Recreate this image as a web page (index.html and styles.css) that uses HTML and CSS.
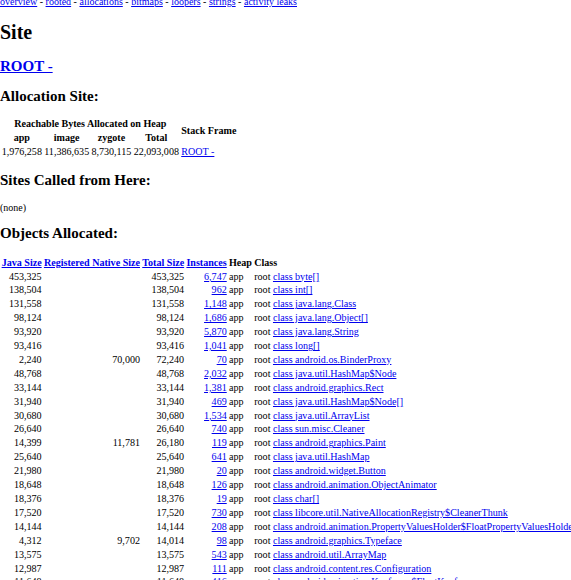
FILE: index.html
```html
<!DOCTYPE html>
<html>
<head>
<meta charset="utf-8">
<title>Site</title>
<link rel="stylesheet" href="styles.css">
</head>
<body>
<div class="page">
<div class="menu"><a href="#">overview</a> - <a href="#">rooted</a> - <a href="#">allocations</a> - <a href="#">bitmaps</a> - <a href="#">loopers</a> - <a href="#">strings</a> - <a href="#">activity leaks</a></div>
<h1>Site</h1>
<h2><a href="#">ROOT -</a></h2>
<h2 class="tight">Allocation Site:</h2>
<table>
<tr><th colspan="4">Reachable Bytes Allocated on Heap</th><th rowspan="2">Stack Frame</th></tr>
<tr><th>app</th><th>image</th><th>zygote</th><th>Total</th></tr>
<tr><td class="num">1,976,258</td><td class="num">11,386,635</td><td class="num">8,730,115</td><td class="num">22,093,008</td><td><a href="#">ROOT -</a></td></tr>
</table>
<h2>Sites Called from Here:</h2>
<p>(none)</p>
<h2>Objects Allocated:</h2>
<table>
<tr><th><a href="#">Java Size</a></th><th><a href="#">Registered Native Size</a></th><th><a href="#">Total Size</a></th><th><a href="#">Instances</a></th><th class="left">Heap</th><th class="left">Class</th></tr>
<tr><td class="num">453,325</td><td class="num"></td><td class="num">453,325</td><td class="num"><a href="#">6,747</a></td><td>app</td><td>root <a href="#">class byte[]</a></td></tr>
<tr><td class="num">138,504</td><td class="num"></td><td class="num">138,504</td><td class="num"><a href="#">962</a></td><td>app</td><td>root <a href="#">class int[]</a></td></tr>
<tr><td class="num">131,558</td><td class="num"></td><td class="num">131,558</td><td class="num"><a href="#">1,148</a></td><td>app</td><td>root <a href="#">class java.lang.Class</a></td></tr>
<tr><td class="num">98,124</td><td class="num"></td><td class="num">98,124</td><td class="num"><a href="#">1,686</a></td><td>app</td><td>root <a href="#">class java.lang.Object[]</a></td></tr>
<tr><td class="num">93,920</td><td class="num"></td><td class="num">93,920</td><td class="num"><a href="#">5,870</a></td><td>app</td><td>root <a href="#">class java.lang.String</a></td></tr>
<tr><td class="num">93,416</td><td class="num"></td><td class="num">93,416</td><td class="num"><a href="#">1,041</a></td><td>app</td><td>root <a href="#">class long[]</a></td></tr>
<tr><td class="num">2,240</td><td class="num">70,000</td><td class="num">72,240</td><td class="num"><a href="#">70</a></td><td>app</td><td>root <a href="#">class android.os.BinderProxy</a></td></tr>
<tr><td class="num">48,768</td><td class="num"></td><td class="num">48,768</td><td class="num"><a href="#">2,032</a></td><td>app</td><td>root <a href="#">class java.util.HashMap$Node</a></td></tr>
<tr><td class="num">33,144</td><td class="num"></td><td class="num">33,144</td><td class="num"><a href="#">1,381</a></td><td>app</td><td>root <a href="#">class android.graphics.Rect</a></td></tr>
<tr><td class="num">31,940</td><td class="num"></td><td class="num">31,940</td><td class="num"><a href="#">469</a></td><td>app</td><td>root <a href="#">class java.util.HashMap$Node[]</a></td></tr>
<tr><td class="num">30,680</td><td class="num"></td><td class="num">30,680</td><td class="num"><a href="#">1,534</a></td><td>app</td><td>root <a href="#">class java.util.ArrayList</a></td></tr>
<tr><td class="num">26,640</td><td class="num"></td><td class="num">26,640</td><td class="num"><a href="#">740</a></td><td>app</td><td>root <a href="#">class sun.misc.Cleaner</a></td></tr>
<tr><td class="num">14,399</td><td class="num">11,781</td><td class="num">26,180</td><td class="num"><a href="#">119</a></td><td>app</td><td>root <a href="#">class android.graphics.Paint</a></td></tr>
<tr><td class="num">25,640</td><td class="num"></td><td class="num">25,640</td><td class="num"><a href="#">641</a></td><td>app</td><td>root <a href="#">class java.util.HashMap</a></td></tr>
<tr><td class="num">21,980</td><td class="num"></td><td class="num">21,980</td><td class="num"><a href="#">20</a></td><td>app</td><td>root <a href="#">class android.widget.Button</a></td></tr>
<tr><td class="num">18,648</td><td class="num"></td><td class="num">18,648</td><td class="num"><a href="#">126</a></td><td>app</td><td>root <a href="#">class android.animation.ObjectAnimator</a></td></tr>
<tr><td class="num">18,376</td><td class="num"></td><td class="num">18,376</td><td class="num"><a href="#">19</a></td><td>app</td><td>root <a href="#">class char[]</a></td></tr>
<tr><td class="num">17,520</td><td class="num"></td><td class="num">17,520</td><td class="num"><a href="#">730</a></td><td>app</td><td>root <a href="#">class libcore.util.NativeAllocationRegistry$CleanerThunk</a></td></tr>
<tr><td class="num">14,144</td><td class="num"></td><td class="num">14,144</td><td class="num"><a href="#">208</a></td><td>app</td><td>root <a href="#">class android.animation.PropertyValuesHolder$FloatPropertyValuesHolder</a></td></tr>
<tr><td class="num">4,312</td><td class="num">9,702</td><td class="num">14,014</td><td class="num"><a href="#">98</a></td><td>app</td><td>root <a href="#">class android.graphics.Typeface</a></td></tr>
<tr><td class="num">13,575</td><td class="num"></td><td class="num">13,575</td><td class="num"><a href="#">543</a></td><td>app</td><td>root <a href="#">class android.util.ArrayMap</a></td></tr>
<tr><td class="num">12,987</td><td class="num"></td><td class="num">12,987</td><td class="num"><a href="#">111</a></td><td>app</td><td>root <a href="#">class android.content.res.Configuration</a></td></tr>
<tr><td class="num">11,648</td><td class="num"></td><td class="num">11,648</td><td class="num"><a href="#">416</a></td><td>app</td><td>root <a href="#">class android.animation.Keyframe$FloatKeyframe</a></td></tr>
<tr><td class="num">10,880</td><td class="num"></td><td class="num">10,880</td><td class="num"><a href="#">340</a></td><td>app</td><td>root <a href="#">class android.graphics.Matrix</a></td></tr>
</table>
</div>
</body>
</html>
```

FILE: styles.css
```css
html, body {
  margin: 0;
  padding: 0;
  overflow: hidden;
}
.page {
  font-family: "Liberation Serif", "Times New Roman", serif;
  font-size: 10px;
  line-height: 11.36px;
  margin-top: -4.2px;
}
a { color: #0000ee; }
h1 {
  font-size: 20px;
  line-height: 23px;
  margin: 13.4px 0 14.9px;
}
h2 {
  font-size: 15px;
  line-height: 17.2px;
  margin: 12.45px 0;
}
h2.tight { margin-bottom: 11.45px; }
p { margin: 10px 0; }
table {
  border-spacing: 1.25px;
  font-size: 10.08px;
  line-height: 11.65px;
}
td, th {
  padding: 0.625px;
  white-space: nowrap;
}
td.num { text-align: right; }
th.left { text-align: left; }
```
